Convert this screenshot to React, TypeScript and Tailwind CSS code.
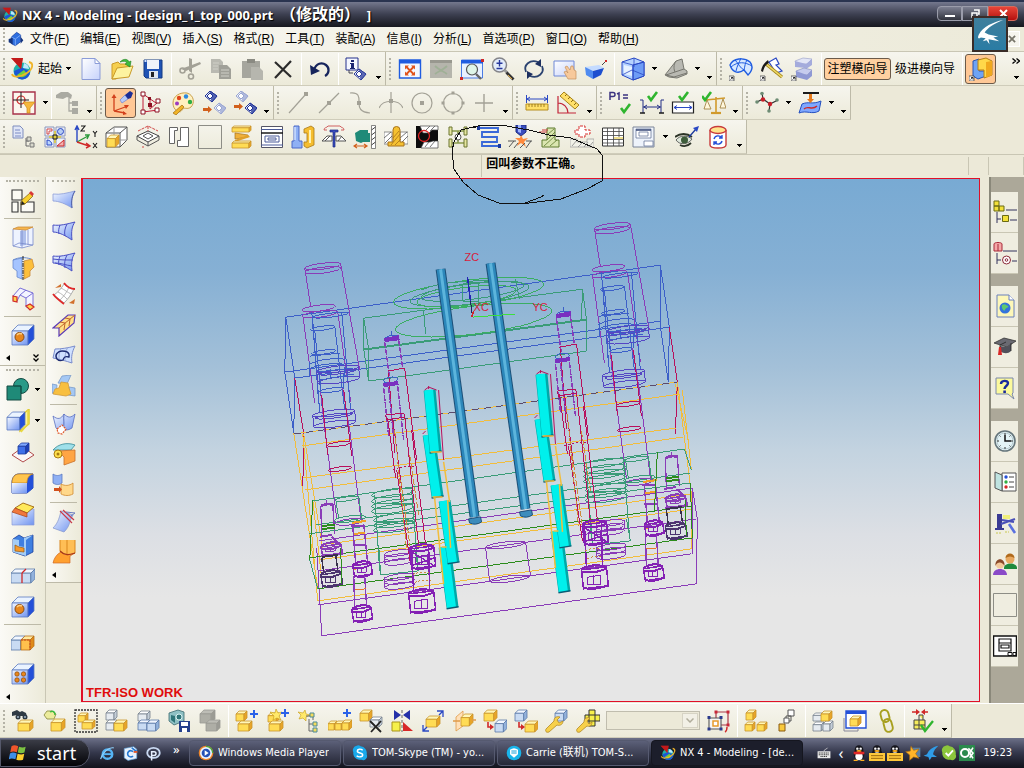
import React from "react";

/* ---------- drawing helpers ---------- */

type PathProps = { d: string; f?: string; s?: string; w?: number; dash?: string };
const P = ({ d, f = "none", s = "none", w = 1, dash }: PathProps) => (
  <path d={d} fill={f} stroke={s} strokeWidth={w} strokeDasharray={dash} />
);

const tones = {
  yellow: ["#fff6b8", "#ffdc55", "#e8a528", "#c9952c"],
  blue: ["#eaf3ff", "url(#faceBlue)", "#2450d8", "#5a78c0"],
  royal: ["#7fa8ff", "#3f6fe8", "#1c3fb8", "#1c3a9c"],
  ghost: ["#ffffff", "#e6ebf0", "#c4ced8", "#76828e"],
  pale: ["#f2f7ff", "#c9dbf3", "#93b2dc", "#5a7aa8"],
  grey: ["#bdbdb6", "#aeaea6", "#9b9b94", "#9b9b94"],
  amber: ["#ffe9a0", "#ffc14d", "#e08a1a", "#b8701a"],
} as const;

type CubeProps = { x: number; y: number; w: number; h?: number; tone?: keyof typeof tones };
const Cube = ({ x, y, w, h = w, tone = "yellow" }: CubeProps) => {
  const [t, f, s, e] = tones[tone];
  const d = Math.min(w, h) * 0.3;
  return (
    <g stroke={e} strokeWidth={0.8} strokeLinejoin="round">
      <path d={`M${x} ${y + d}L${x + d} ${y}H${x + w}L${x + w - d} ${y + d}Z`} fill={t} />
      <path d={`M${x} ${y + d}H${x + w - d}V${y + h}H${x}Z`} fill={f} />
      <path d={`M${x + w - d} ${y + d}L${x + w} ${y}V${y + h - d}L${x + w - d} ${y + h}Z`} fill={s} />
    </g>
  );
};

const Check = ({ x, y }: { x: number; y: number }) => (
  <path d={`M${x} ${y + 4}l3 4l6 -8`} fill="none" stroke="#2fb52f" strokeWidth={2.6} />
);
const Plus = ({ x, y }: { x: number; y: number }) => (
  <path d={`M${x} ${y}v8M${x - 4} ${y + 4}h8`} stroke="#2b62e8" strokeWidth={2} />
);
const Binoculars = ({ x, y, c }: { x: number; y: number; c: string }) => (
  <g fill={c}>
    <path d={`M${x} ${y + 2}l5-2l3 2l2-1l4 2l1 4l-3-1l-4 0l-3-1l-5 1z`} />
    <circle cx={x + 6} cy={y + 7} r={2.5} />
    <circle cx={x + 13} cy={y + 7} r={2.5} />
    <circle cx={x + 6} cy={y + 7} r={1} fill="#9fb4c8" />
    <circle cx={x + 13} cy={y + 7} r={1} fill="#9fb4c8" />
  </g>
);
const Shortcut = () => (
  <g>
    <path d="M0 19h5v5H0z" fill="#fff" stroke="#333" strokeWidth={0.7} />
    <path d="M1.5 22.5L3.8 20.500M2 20.500h2v2" stroke="#111" fill="none" strokeWidth={0.8} />
  </g>
);
const Diamond = ({ x, y, c }: { x: number; y: number; c: string }) => (
  <g stroke={c} strokeWidth={1}>
    <path d={`M${x} ${y + 5}l5-5l7 5l-5 6z`} fill="#eef2fb" />
    <path d={`M${x + 5} ${y}l7 5l-5 6z`} fill={c} opacity={0.75} />
    <path d={`M${x + 2} ${y + 5}l3-3l3 3l-3 3z`} fill="#fff" />
  </g>
);
const Nx = () => (
  <g>
    <circle cx={12} cy={14} r={8.5} fill="#1fb1a8" />
    <path d="M4 14a8.500 8.500 0 0 0 8 8.500c5 0 8-4 8-8l-8-4z" fill="#1d56d6" />
    <path d="M7 18c3 3 8 3 10-1l-3-4z" fill="#6fd23c" />
    <path d="M14 6c3 1 5 3 5 6l-6-1z" fill="#bfe8ff" />
    <path d="M1 1l12 0l-2 11z" fill="#e02424" />
    <path d="M1 1l10 11l2-11z" fill="#a91212" opacity={0.55} />
    <path d="M19 5c5 1 4 7-2 11S3 21 2 17" fill="none" stroke="#f0b429" strokeWidth={1.8} />
  </g>
);
const Windshape = () => (
  <g>
    <path d="M3 4c3-2 5-1 8 0l-1.500 7c-3-1-5-1.500-8 0z" fill="#f0562b" />
    <path d="M12 4.500c3 1 5 1.500 8 0l-1.500 7c-3 1-5 1-8 0z" fill="#7cc242" />
    <path d="M1.200 12.500c3-2 5-1 8 0l-1.500 7c-3-1-5-1.500-8 0z" fill="#3f8fe8" />
    <path d="M10.300 13c3 1 5 1.500 8 0l-1.500 7c-3 1-5 1-8 0z" fill="#ffd02e" />
  </g>
);
const Penguin = () => (
  <g>
    <ellipse cx={12} cy={14} rx={8} ry={9} fill="#15151c" />
    <circle cx={12} cy={7} r={6.500} fill="#15151c" />
    <ellipse cx={12} cy={17} rx={5.500} ry={6} fill="#fff" />
    <circle cx={9.500} cy={5.500} r={1.800} fill="#fff" />
    <circle cx={14.500} cy={5.500} r={1.800} fill="#fff" />
    <ellipse cx={12} cy={9} rx={4} ry={1.600} fill="#ffb01f" />
  </g>
);

/* ---------- icon set (24 x 24) ---------- */

const BL = "#2a48c4";
const K = "#1a1a1a";
const GR = "#a3a196";
const RD = "#d02828";

const icons: Record<string, React.ReactNode> = {
  nx: <Nx />,
  assembly: (
    <g>
      <P d="M5 9l8-7l6 4v10l-8 6l-6-3z" f="#2f6fe0" s="#163b96" />
      <P d="M5 9l6 3l8-6M11 12v10" s="#9cc2ff" />
      <P d="M1 12l6-2v10l-6-3zM19 9l4 5l-4 5z" f="#16357f" />
    </g>
  ),
  newFile: (
    <g>
      <P d="M3 1.500h13l5 5v16H3z" f="url(#paper)" s="#8b9cd8" />
      <P d="M16 1.500v5h5z" f="#fff" s="#8b9cd8" />
    </g>
  ),
  open: (
    <g>
      <P d="M2 7l6-2l2 2h9v5L6 22H2z" f="#f6d050" s="#c99a28" />
      <P d="M2 22l5-11l16-2l-4 11z" f="#fdf3a0" s="#c99a28" />
      <P d="M10 5c4-4 8-3 9 0l2-1l-1 6l-5-3l2-1c-1-2-4-2-7-1z" f="#3dbb3d" s="#1f7d1f" w={0.6} />
    </g>
  ),
  save: (
    <g>
      <P d="M3 3h18v18H5l-2-2z" f="#1f53b4" s="#143a82" />
      <P d="M6 3h12v9H6z" f="#eef3fa" />
      <P d="M8 14h9v7H8z" f="#dfe6ee" />
      <P d="M10 15h3v5h-3z" f="#222" />
      <P d="M3.500 3h2v2h-2z" f="#cfe0ff" />
    </g>
  ),
  cut: (
    <g>
      <P d="M3 12l19-7l1 2l-15 7M11 1l3 1l0 14l-3-2z" f={GR} />
      <circle cx={4.500} cy={13.500} r={2.500} fill="none" stroke={GR} strokeWidth={1.600} />
      <circle cx={13} cy={19.500} r={2.500} fill="none" stroke={GR} strokeWidth={1.600} />
    </g>
  ),
  copy: (
    <g>
      <P d="M2 2h9l3 3v11H2z" f="#b9b9b1" />
      <P d="M10 8h8l4 4v10H10z" f="#a0a098" />
      <P d="M4 6h6M4 9h5M4 12h5M12 13h8M12 16h8M12 19h8" s="#cfcfc7" />
    </g>
  ),
  paste: (
    <g>
      <P d="M2 4h18v17H2z" f="#a6a69e" />
      <P d="M7 2h8v4H7z" f="#8a8a82" />
      <P d="M11 10h8l4 4v9H11z" f="#b6b6ae" />
    </g>
  ),
  del: <P d="M4 5l16 15M20 4L4 21" s="#2b2b2b" w={2.2} />,
  undo: (
    <g>
      <P d="M6 13C8 6 14 5 18 8c4 3 3 9-1 11" s="#16245c" w={2.200} />
      <P d="M2 8l1 10l9-4z" f="#16245c" />
    </g>
  ),
  info: (
    <g>
      <P d="M1 1h12v12H1z" f="#f4f7ff" s="#24308c" />
      <P d="M6 3h3v2H6zM5 6h4v5h1v1H5v-1h1V7H5z" f="#1a2470" />
      <P d="M4 13v3h4" s="#445" />
      <Diamond x={9} y={12} c="#2c3c9c" />
    </g>
  ),
  fit: (
    <g>
      <P d="M1.500 3h21v18h-21z" f="#f3f8ff" s="#1f5ce0" w={1.400} />
      <P d="M1 3h22v3.500H1z" f="#1f5ce0" />
      <P d="M8.500 10l7 7M15.500 10l-7 7" s="#e0541c" w={1.800} />
      <P d="M7 8.500h4l-4 4zM17 8.500h-4l4 4zM7 18.500h4l-4-4zM17 18.500h-4l4-4z" f="#e0541c" />
    </g>
  ),
  fitGrey: (
    <g>
      <P d="M1 3h22v18H1z" f="#b5b5ac" />
      <P d="M1 3h22v3H1z" f="#98988f" />
      <P d="M6 9c4 4 8 5 12 8M18 9c-4 4-8 5-12 8" s="#9fb096" w={1.800} />
    </g>
  ),
  zoomBox: (
    <g>
      <P d="M1.500 3h21v18h-21z" f="#e8f1ff" s="#4a7be4" />
      <P d="M1 3h22v3.500H1z" f="#1f5ce0" />
      <circle cx={12} cy={12.500} r={5.500} fill="#dff5e8" stroke="#555" strokeWidth={1.200} />
      <P d="M16 17l5 5" s="#666" w={2.400} />
      <P d="M21 2h3v3h-3zM0 20h3v3H0z" f={RD} />
    </g>
  ),
  zoomInOut: (
    <g>
      <circle cx={8.500} cy={8} r={7} fill="#e3ecfa" stroke="#85858a" strokeWidth={1.500} />
      <P d="M8.500 3v6.500M5.500 6.250h6M5.500 11.500h6" s="#27379c" w={1.400} />
      <P d="M13.500 13l3 3" s="#999" w={2.600} />
      <P d="M15.500 15.500l7 7" s="#333" w={2.800} />
      <P d="M17 18l4 4" s="#e0a83c" />
    </g>
  ),
  rotate: (
    <g>
      <P d="M4 15C1 8 8 2 16 5M20 9c3 7-4 13-12 10" s="#2b4370" w={1.800} />
      <P d="M19 2v8l-6-3zM5 22v-8l6 3z" f="#1d3060" />
    </g>
  ),
  pan: (
    <g>
      <P d="M1 4h20v15H1z" f="url(#paper)" s="#6f88d6" />
      <P d="M12 10l2-1l3 4l1-4h2l1 4l2 1v8h-8l-4-7l2-1l2 2z" f="#f7c99b" s="#c4905c" w={0.700} />
    </g>
  ),
  perspective: (
    <g>
      <P d="M1 10l14-2l5 3l-12 3z" f="#c4dbff" />
      <P d="M1 10l8 4v8l-7-4z" f="#4f8bf0" />
      <P d="M9 14l11-3l-3 7l-8 4z" f="#1d4fcf" />
      <P d="M18 8l3-3" s={K} w={0.800} />
      <P d="M21 3h2v2h-2z" f={RD} />
    </g>
  ),
  shade: (
    <g>
      <P d="M1 5l12-4l10 4v14l-11 4L1 18z" f="#b5d2ff" s={BL} />
      <P d="M12 8l11-3v14l-11 4z" f="#6e9cf6" s={BL} />
      <P d="M3 8l8 2v9l-8-2z" f="#e6f1ff" />
      <P d="M1 5l11 3l11-3M12 8v15M13 1v9M1 18l10-5l12 5" s={BL} w={0.800} />
    </g>
  ),
  wedge: (
    <g>
      <P d="M1 18l11-14l6-2l2 10l3 2v3l-10 4l-8-1z" f="#b9b9b2" s="#77776f" />
      <P d="M12 4c-3 4-2 9-1 11l9-3M11 15l-9 3l8 2l13-4" s="#77776f" />
    </g>
  ),
  freeform: (
    <g>
      <P d="M1 8C4 1 15 0 21 5c4 5 2 9-2 13l-4-5C8 18 3 14 1 8z" f="#d6e8ff" s="#1f5ce0" w={1.400} />
      <P d="M6 3c4 4 5 8 9 10M2 10c7-6 14-5 21-1M12 1c-2 5-4 8-5 13M18 3c-2 3-2 6-3 10" s="#1f5ce0" />
      <Shortcut />
    </g>
  ),
  sheet: (
    <g>
      <P d="M9 5l7-4l3 6l-3 1l6 6l-6 2z" f="#fff" s={BL} w={1.200} />
      <P d="M6 7l16 13" s="#a88a1c" w={3.200} />
      <P d="M6 7l16 13" s="#f0dc6a" w={1.600} />
      <P d="M1 14C2 9 4 6 8 3l1 3c-4 2-5 5-6 9z" f={K} />
      <Shortcut />
    </g>
  ),
  layers: (
    <g>
      <P d="M4 4l8-3l9 1l-5 5H5z" f="#e2e5f6" s="#a0a6cc" w={0.700} />
      <P d="M4 4v6l11 1V7zM15 7l6-5v6l-6 4z" f="#a4abdc" />
      <P d="M5 14l8-3l8 2l-5 5H6z" f="#c6ccee" s="#8890c4" w={0.700} />
      <P d="M5 14v6l11 3v-5zM16 18l5-5v6l-5 4z" f="#8f99d4" />
      <Shortcut />
    </g>
  ),
  moldWizard: (
    <g>
      <P d="M4 4l6-2v12h7v5l-8 3l-5-3z" f="#6fa3f4" s="#2a55b0" />
      <P d="M9 3l8-2l6 3v14l-8 3v-8h-6z" f="#ffd84a" s="#b57f17" />
      <P d="M17 5l6-1v14l-6 3z" f="#f0a81e" />
      <Shortcut />
    </g>
  ),
  filter: (
    <g>
      <P d="M1 1h22v22H1z" f="#fbf6ee" s="#a8324a" w={1.400} />
      <circle cx={9} cy={9} r={4} fill="none" stroke={RD} strokeWidth={1.200} />
      <P d="M9 1v16M1 9h16" s={K} />
      <P d="M11 11h12l-5 6v5h-3v-5z" f="#f6b73c" s="#c98a1a" w={0.700} />
    </g>
  ),
  treeGrey: (
    <g fill="#aaaaa2">
      <path d="M0 4l5-3h7l4 3l-1 4l-4-2l-4 2l-7-1z" />
      <path d="M16 10h6v5h-6zM16 17h6v6h-6z" />
      <P d="M13 7v13h3M13 12h3" s="#aaaaa2" w={1.300} />
    </g>
  ),
  wcs: (
    <g>
      <P d="M5 20V6M5 20l14-5M5 20l11 2" s="#d2401c" w={1.300} />
      <P d="M5 3l2.500 4h-5zM20 14l-3 4l-2-4zM18 23l-4 1v-4z" f="#d2401c" />
      <P d="M11 9l5-5l3 4l-6 4z" f="#b8ccfa" s="#5a74d0" w={0.600} />
      <P d="M16 4l5-4l3 2l-2 5l-3 1z" f="#1e2f96" />
    </g>
  ),
  points: (
    <g>
      <P d="M3 3v18M3 3l13 9M3 21l15-2M10 9v9l7-6" s="#c01c38" />
      <P d="M1 1h4v4H1zM1 19h4v4H1zM16 8h4v4h-4zM15 17h4v4h-4z" f="#fff" s="#8b1022" />
      <P d="M8 12h4v4H8zM8 6h3v3H8z" f="#8b1022" />
    </g>
  ),
  palette: (
    <g>
      <P d="M2 12C2 5 9 1 16 2c7 2 8 10 4 14c-4 3-6 0-8 2s-2 4-6 2c-3-2-4-5-4-8z" f="#fff0c0" s="#c9a04a" />
      <circle cx={8} cy={7} r={2.200} fill="#e0451c" />
      <circle cx={15} cy={5.500} r={2.200} fill="#2c8ae0" />
      <circle cx={19} cy={11} r={2.200} fill="#2fae43" />
      <circle cx={6} cy={12.500} r={2} fill="#9a3cc0" />
      <P d="M2 22l9-8l2 2L5 24z" f="#f0b429" s="#a06a10" w={0.700} />
    </g>
  ),
  showHide: (
    <g>
      <Diamond x={3} y={0} c="#1f3298" />
      <Diamond x={12} y={12} c="#9aa6d2" />
      <P d="M1 17h5v-2l4 3.500l-4 3.500v-2H1z" f="#d2601c" />
    </g>
  ),
  hideShow: (
    <g>
      <Diamond x={3} y={0} c="#9aa6d2" />
      <Diamond x={12} y={12} c="#1f3298" />
      <P d="M1 14h5v-2l4 3.500l-4 3.500v-2H1z" f="#d2601c" />
    </g>
  ),
  line: (
    <g>
      <P d="M3 22L20 3" s={GR} w={1.200} />
      <P d="M18 1h4v4h-4z" f={GR} />
    </g>
  ),
  lineMid: (
    <g>
      <P d="M2 22L22 2" s={GR} w={1.200} />
      <P d="M10 10h4v4h-4z" f={GR} />
    </g>
  ),
  curve: (
    <g>
      <P d="M2 2c10-1 9 5 9 10s1 9 11 10" s={GR} w={1.200} />
      <P d="M9 10h4v4H9z" f={GR} />
    </g>
  ),
  cross: (
    <g>
      <P d="M12 1v21M0 17C4 8 20 8 24 17" s={GR} w={1.200} />
      <P d="M10 8h4v4h-4z" f={GR} />
    </g>
  ),
  circleDot: (
    <g>
      <circle cx={12} cy={12} r={10} fill="none" stroke={GR} strokeWidth={1.200} />
      <P d="M10 10h4v4h-4z" f={GR} />
    </g>
  ),
  circleQuad: (
    <g>
      <circle cx={12} cy={12} r={9.500} fill="none" stroke={GR} strokeWidth={1.200} />
      <P d="M10.500 0.500h3v3h-3zM10.500 20.500h3v3h-3zM0.500 10.500h3v3h-3zM20.500 10.500h3v3h-3z" f={GR} />
    </g>
  ),
  plusGrey: <P d="M12 3v18M3 12h18" s={GR} w={1.400} />,
  ruler: (
    <g>
      <P d="M2 8h20M1.500 4v8M22.500 4v8M5 6L2 8l3 2M19 6l3 2l-3 2" s={BL} />
      <P d="M1 13h22v6H1z" f="#ffe069" s="#b58d1e" />
      <P d="M4 13v3M7 13v3M10 13v3M13 13v3M16 13v3M19 13v3" s="#8b6a14" w={0.800} />
    </g>
  ),
  angle: (
    <g>
      <P d="M2 5v17h18M2 12a10 10 0 0 1 10 10" s="#c22438" w={1.200} />
      <P d="M8 1l15 13l-4 4L4 5z" f="#ffe069" s="#a8841a" />
      <P d="M9 5l2-2M12 8l2-2M15 11l2-2M18 14l2-2" s="#8b6a14" />
    </g>
  ),
  p1: (
    <g>
      <P d="M1 9V1.500h3a2 2 0 0 1 0 4H1M8 3l2-1v7M14 4h5M14 7h5" s="#3b3380" w={1.500} />
      <Check x={12} y={13} />
    </g>
  ),
  gapCheck: (
    <g>
      <P d="M3 9v13M0 9h3M21 9v13M24 9h-3M3 16h18M7 14l-3 2l3 2M17 14l3 2l-3 2" s="#222e86" />
      <P d="M0 22h5M19 22h5" s={K} w={1.500} />
      <Check x={8} y={1} />
    </g>
  ),
  boxCheck: (
    <g>
      <P d="M1.500 11h21v11h-21z" f="#fff" s="#222" w={1.200} />
      <P d="M3 16.500h18M6 14.500l-3 2l3 2M18 14.500l3 2l-3 2" s={BL} />
      <Check x={8} y={1} />
    </g>
  ),
  balance: (
    <g>
      <P d="M14 6v15M4 9l19-2" s="#d19a2c" w={1.600} />
      <P d="M5 9l-3 9h7zM21 8l-3 9h6z" f="#fff7dc" s="#9a7a36" w={0.800} />
      <P d="M9 22h10" s="#d19a2c" w={2.200} />
      <Check x={0} y={1} />
    </g>
  ),
  spline: (
    <g>
      <P d="M2 11l6-3l7 5l8-4M8 8L7 2M15 13l-1 7" s="#333" w={1.200} />
      <g fill="#c81e28">
        <circle cx={8} cy={8.500} r={2.200} />
        <circle cx={15} cy={13} r={2.200} />
      </g>
      <g fill="#6d8c74">
        <circle cx={2} cy={11} r={1.800} />
        <circle cx={22} cy={9} r={1.800} />
        <circle cx={7} cy={2.500} r={1.800} />
        <circle cx={14} cy={20} r={1.800} />
      </g>
    </g>
  ),
  project: (
    <g>
      <P d="M5 2h16" s={K} w={2} />
      <P d="M4 13c7-3 10 1 19-3l-2 10c-7 4-12-1-20 2z" f="#7fa8ff" s="#2450c0" />
      <P d="M6 18c4-4 8 2 13-3" s={RD} w={1.400} />
      <P d="M11 3h3v5h2l-3.500 4l-3.500-4h2z" f="#e67a1c" />
    </g>
  ),
  projectInit: (
    <g>
      <P d="M1 1h7l3 3v9H1z" f="#dfe5f6" s="#7f8dbd" />
      <P d="M3 5h5M3 8h6M3 11h6" s="#7a8ac4" />
      <P d="M14 13v8h3M14 16h3" s="#666" />
      <P d="M15 12h4v4h-4zM18 18h4v4h-4z" f="#d8d8cc" s="#777" />
    </g>
  ),
  family: (
    <g>
      <P d="M2 2h9v9H2zM13 2h9v9h-9zM2 13h9v9H2zM13 13h9v9h-9z" f="#eef2fa" s="#8a96bc" />
      <P d="M4 4h5v2H6v3H4z" f="#fff" s="#d04848" />
      <circle cx={17.500} cy={6.500} r={3} fill="#b6cdf4" stroke={BL} />
      <P d="M4 20v-5a5 5 0 0 1 5 5z" f="#bcd6ff" s={BL} />
      <P d="M14 21l7-6v6z" f="#f2b0b0" s={RD} />
      <P d="M12 6v12M6 12h12" s="#e0cc30" w={1.500} />
      <P d="M10 10h4v4h-4z" s={K} />
    </g>
  ),
  moldCsys: (
    <g>
      <P d="M3 17V2M1 5l2-4l2 4" s={BL} w={1.400} />
      <P d="M3 17l11-6M11 10l4 0l-2 4" s="#2d9a3c" w={1.400} />
      <P d="M3 17l12 4M12 18l4 3l-4 2" s={RD} w={1.400} />
      <P d="M7 1h4l-4 5h4M19 6l2 2.500l2-2.500M21 8.500V12M19 18l4 5M23 18l-4 5" s={K} w={1.100} />
    </g>
  ),
  workpiece: (
    <g>
      <P d="M1 8l8-6h13v13l-7 7H1zM1 8h14v14M15 8l7-6" f="#fff" s="#555" />
      <P d="M9 2v13h13" s="#999" />
      <Cube x={2} y={10} w={12} />
    </g>
  ),
  cavityLayout: (
    <g>
      <P d="M1 11l11-5l11 5l-11 6z" f="#fff" s="#444" />
      <P d="M1 11v4l11 6l11-6v-4M12 17v4M7 11l5-3l5 3l-5 3z" s="#555" />
      <P d="M2 6l10-5l10 5M12 1v5M7 21v2" s="#d04848" dash="3 1" />
    </g>
  ),
  moldTools: <P d="M2.500 2.500h8v3h-3v13h-5zM21.500 2.500h-8v13h-3v6h11z" f="#fff" s="#666" />,
  blankBox: <P d="M0.500 0.500h23v23h-23z" s="#8d8d86" />,
  parting: (
    <g>
      <Cube x={3} y={1} w={19} h={6} />
      <P d="M6 8l13 2l0 2l-13 2z" f="#f0b03a" s="#a8731a" w={0.700} />
      <P d="M19 10l-13 5l0 2l15-5z" f="#e0a02a" />
      <Cube x={3} y={16} w={19} h={7} />
    </g>
  ),
  moldBase: (
    <g>
      <P d="M1.500 1.500h21v21h-21z" f="#fff" s="#556" />
      <P d="M1 4.500h22M1 20h22M5 11h14v6H5zM8 13h8v2H8z" s="#4a5a98" />
      <P d="M1 8h22" s={K} w={1.500} />
    </g>
  ),
  standardPart: (
    <g>
      <P d="M3 1h5v15h3v7H1v-7h2z" f="#8fb0f4" s="#4a68c8" />
      <P d="M4 2v13" s="#d6e4ff" w={1.400} />
      <P d="M13 4l7-3l3 2v17l-7 3l-3-2v-4h3V8h-3z" f="#f5bd2f" s="#a8781a" w={0.800} />
      <P d="M18 5h2v13h-2z" f="#fff1b0" />
    </g>
  ),
  ejector: (
    <g>
      <P d="M8 5h8v2h-3v15h-2V7H8z" f="#3a4ec0" s="#1a2a80" w={0.700} />
      <P d="M0 16l5-5h5v5zM24 16l-5-5h-5v5z" f="#fff" s="#555" />
      <P d="M3 16l5-5M16 16l4-5" s="#555" />
      <P d="M2 5c0-3 3-2 4-4h12c1 2 4 1 4 4M2 5h3M19 5h3" s="#d06060" />
    </g>
  ),
  slider: (
    <g>
      <P d="M2 8l5-3h8v3h2v9h-7l-2 1l-5-2z" f="#1f8a78" />
      <P d="M18.500 0.500h4v23h-4z" f="#fff" s="#555" w={0.700} />
      <P d="M18.500 5l4-3M18.500 10l4-3M18.500 15l4-3M18.500 20l4-3" s="#444" />
      <P d="M2 21h11M4 19l-3 2l3 2M11 19l3 2l-3 2" s="#d2601c" w={1.200} />
    </g>
  ),
  insert: (
    <g>
      <P d="M0 7h8v12H0zM16 7h8v12h-8z" f="#fff" s="#666" w={0.700} />
      <P d="M0 13l7-6M1 18l7-7M16 13l7-6M17 18l7-7" s="#555" w={0.800} />
      <P d="M9 5a3 3 0 0 1 7 0v12h4v4H4v-4h5z" f="#f5c132" s="#a8731a" />
      <P d="M7 20l9-11M11 20l6-6M9 13l6-7" s="#a8731a" w={0.800} />
    </g>
  ),
  gate: (
    <g>
      <P d="M1 1h22v22H1z" f="#0c0c0c" />
      <P d="M5 1h18v4h-6l-3 3H8zM6 23l3-6h6l3-1h5v7z" f="#fff" s="#444" w={0.700} />
      <P d="M10 6l5-5M15 6l5-5M10 22l4-5M15 22l5-6" s="#555" w={0.800} />
      <circle cx={9} cy={11} r={5.500} fill="none" stroke="#e02424" strokeWidth={1.300} />
    </g>
  ),
  runner: (
    <g>
      <P d="M5 6h14M5 18h14M12 6v12" s="#8a9a4c" w={1.600} />
      <P d="M3 2h3v8H3zM18 2h3v8h-3zM3 14h3v8H3zM18 14h3v8h-3z" f="#e6e6a0" s="#6a7430" />
      <circle cx={12} cy={12} r={3} fill="#fff" stroke="#555" />
    </g>
  ),
  cooling: (
    <g>
      <P d="M2 3h19v4H5v5h15v5H5v4h17" s="#3a68d8" w={1.900} />
      <P d="M0 1h3v4H0zM21 19h3v4h-3z" f="#1c3a9c" />
    </g>
  ),
  electrode: (
    <g>
      <P d="M8 0h10v7l-5 4l-5-4z" f="#3a4ec0" s="#1a2a80" />
      <P d="M10 0h3v8l-3-1z" f="#9fb4ff" />
      <P d="M13 10l2 4l5-1l-4 4l2 5l-5-4l-4 3l2-5l-4-3h5z" f="#ff8a3c" />
      <P d="M0 16h8M1 22l5-6M6 23l4-5M12 23l5-5M18 23l5-7M18 16h6" s="#555" />
    </g>
  ),
  trim: (
    <g>
      <P d="M8 3h8v12h4v7H3v-7h5z" f="#dbe6b0" s="#5f7a2e" />
      <P d="M8 10l7-6M8 15l8-8M5 21l11-10M11 21l7-6" s="#5f7a2e" w={0.800} />
      <P d="M0 7h8M3 5h6" s="#c83a3a" />
    </g>
  ),
  subtract: (
    <g>
      <P d="M9 12V9H5V5h4V1h6v4h5v4h-5v3z" f="#fff" s="#d83030" dash="3 1" />
      <P d="M0 14h7v3h10v-3h7v8H0z" f="#f1f1e8" s="#999" w={0.700} />
      <P d="M2 21l5-6M8 22l4-4M14 22l4-5M19 22l4-5" s="#888" w={0.800} />
    </g>
  ),
  bom: (
    <g>
      <P d="M1.500 3h21v18h-21z" f="#fff" s="#333" />
      <P d="M1 6.500h22M1 10.500h22M1 14.500h22M1 18h22M6.500 3v18M12.500 3v18M18 3v18" s="#444" w={0.800} />
      <P d="M13 12h9v2h-9z" f="#f0e090" />
    </g>
  ),
  drawing: (
    <g>
      <P d="M1 2h21v20H1z" f="#eef3fb" s="#7a8498" />
      <P d="M4 4h15v9H4zM7 7h9v4H7zM12 16h9v5h-9z" f="#fff" s="#6a789c" w={0.800} />
      <P d="M4 5h15" s="#3a4a78" w={1.500} />
    </g>
  ),
  eye: (
    <g>
      <P d="M1 15c4-5 11-5 16-1c-3 5-12 7-16 1z" f="#dfe8dc" s="#444" w={0.800} />
      <circle cx={9.500} cy={15} r={3.500} fill="#3d5c3a" />
      <P d="M0 12c5-4 12-4 17 0M5 20c4 2 8 1 11-2" s="#2c3428" w={1.800} />
      <P d="M14 12l7-8" s="#1c3a9c" w={1.400} />
      <P d="M18 3l6-2l-2 6z" f="#2a48c4" />
    </g>
  ),
  refreshDb: (
    <g>
      <P d="M4 5v15c0 4 16 4 16 0V5" f="#fff" s="#c83a3a" w={1.400} />
      <ellipse cx={12} cy={5} rx={8} ry={3.500} fill="#ffe48c" stroke="#c83a3a" strokeWidth={1.400} />
      <P d="M8 14c1-4 6-4 8-1M16 16c-1 4-6 4-8 1M16 10v3h-3M8 20v-3h3" s="#2450d8" w={1.400} />
    </g>
  ),
  sketch: (
    <g>
      <P d="M1 1h10v10H1zM1 13h6v10H1zM10 13h13v10H10z" f="#fbfaf4" s="#333" w={1.100} />
      <P d="M10 16l1-5l8-7l3 3l-8 8z" f="#f7cf2e" s="#8b6a14" w={0.800} />
      <P d="M18 4l2-2l3 3l-2 2z" f="#d83838" />
      <P d="M10 16l1-4l3 3z" f="#222" />
    </g>
  ),
  extrude: (
    <g>
      <P d="M2 4v17l9 2l11-3V3" f="#eef3ff" s="#7a8ccc" w={0.800} />
      <P d="M9 6v15l6-1V5z" f="#aebfec" />
      <P d="M2 4l5-2h15l-7 3z" f="#f9b64a" s="#c98a3a" w={0.800} />
      <P d="M2 21l6-3l14 2M11 5v18M17 5v15" s="#7a8ccc" w={0.800} />
    </g>
  ),
  revolve: (
    <g>
      <P d="M11 2L2 4v8l4 3v6l5 2z" f="#a5c4ff" s="#6a8cd0" w={0.800} />
      <P d="M13 5l8-2l2 8l-4 4v5l-6 3z" f="#fcbf3c" s="#c98a3a" w={0.800} />
      <P d="M2 4c6-3 12-3 18-1" s="#6a8cd0" />
      <P d="M12 0v24" s="#222" dash="4 1 1 1" />
    </g>
  ),
  sweep: (
    <g>
      <P d="M2 9l7-8l13 5v14h-7v-9l-6-3l-3 6z" f="#f4f4ff" s="#7a70d8" />
      <P d="M2 9l4 1v5l-4-1zM15 19l4-2l4 3l-4 3z" f="#ffd34d" s="#d02828" w={1.200} />
      <P d="M9 8l6-5M15 11l7-5" s="#7a70d8" />
    </g>
  ),
  hole: (
    <g>
      <Cube x={1} y={2} w={22} h={20} tone="blue" />
      <circle cx={8.500} cy={14} r={4.500} fill="#e8861c" stroke="#8a4a10" />
      <P d="M6 12a4 4 0 0 1 5-1" s="#ffd080" w={1.500} />
    </g>
  ),
  unite: (
    <g>
      <circle cx={15} cy={8} r={7.500} fill="#2a9a88" stroke="#144a42" />
      <P d="M1 8h14v14H1z" f="#1f8a78" s="#144a42" />
      <P d="M8 8h7v7" s="#0f5048" />
    </g>
  ),
  trimBody: (
    <g>
      <P d="M14 22V8l9-8v15z" f="#fdf39a" s="#e0cc30" w={1.500} />
      <Cube x={1} y={3} w={18} h={18} tone="blue" />
      <P d="M15 23l7-8V1" s="#e8d840" w={1.500} />
    </g>
  ),
  offsetCube: (
    <g>
      <P d="M12 7L1 15l11 7l11-7z" f="#fbf6f6" s="#b04a4a" />
      <Cube x={7} y={3} w={11} tone="royal" />
    </g>
  ),
  blend: (
    <g>
      <P d="M1 12c0-6 3-9 7-9h14v14l-6 5H1z" f="#7fa8ff" s="#2a4ab0" />
      <P d="M16 12c0-5 2-8 6-9v14l-6 5z" f="#2450d8" />
      <P d="M1 12c0-6 3-9 7-9h14c-4 1-6 4-6 9z" f="#ffc54d" s="#b87a20" w={0.700} />
      <P d="M1 12h15v10H1z" f="url(#faceBlue)" />
    </g>
  ),
  chamfer: (
    <g>
      <P d="M1 10v13h22V7z" f="url(#faceBlue)" s="#8a9cd8" w={0.700} />
      <P d="M4 6l8-5l11 4l-7 6z" f="#ffe95a" s="#a8731a" />
      <P d="M4 6l12 5l0 4L1 10z" f="#f0783c" s="#a8431a" w={0.700} />
    </g>
  ),
  shell: (
    <g>
      <P d="M2 6l6-4l5 3l9-3v17l-8 4l-12-4z" f="#3f7fe0" s="#1c3f9a" w={0.800} />
      <P d="M2 6l6 1v6l5 1V5l9-3l-7 5v16L2 19z" f="#a4cdf6" />
      <P d="M4 12l4 2l5 1v4L4 18z" f="#f59a2a" s="#9a5a10" w={0.700} />
    </g>
  ),
  bodies: (
    <g>
      <Cube x={0} y={5} w={24} h={14} tone="pale" />
      <P d="M11 9v10M11 9l4-4" s={RD} w={1.300} />
    </g>
  ),
  booleanBox: (
    <g>
      <Cube x={0} y={5} w={14} h={14} tone="pale" />
      <Cube x={10} y={5} w={13} h={14} tone="amber" />
      <P d="M10 9h9v10" s="#d04818" dash="2 1" />
    </g>
  ),
  pattern: (
    <g>
      <Cube x={1} y={2} w={22} h={20} tone="blue" />
      <g fill="#e8861c" stroke="#8a4a10" strokeWidth={0.700}>
        <circle cx={6} cy={12} r={2.200} />
        <circle cx={12.500} cy={12} r={2.200} />
        <circle cx={6} cy={18} r={2.200} />
        <circle cx={12.500} cy={18} r={2.200} />
      </g>
    </g>
  ),
  surf1: (
    <g>
      <P d="M1 5c7 1 14-1 22-3c-3 4-4 9-3 17C14 15 7 12 1 12z" f="url(#faceBlue)" s="#8a9cd8" w={0.800} />
      <P d="M20 19c-1-7 0-12 3-17" s="#4a5ca8" />
    </g>
  ),
  surf2: (
    <g>
      <P d="M1 5c7 1 14-1 22-3c-3 4-4 9-3 18C14 16 7 12 1 12z" f="url(#faceBlue)" s="#4a50c4" />
      <P d="M8 5c-1 3-2 6-1 9M15 4c-2 4-3 8-2 12" s="#4a50c4" />
    </g>
  ),
  surf3: (
    <g>
      <P d="M1 5c7 1 14-1 22-3c-3 4-4 9-3 18C14 16 7 12 1 12z" f="url(#faceBlue)" s="#4a50c4" />
      <P d="M8 5c-1 3-2 6-1 9M15 4c-2 4-3 8-2 13M1 8c7 1 13 1 20 1M3 12c6 0 10 2 17 3" s="#4a50c4" />
    </g>
  ),
  sweptSurf: (
    <g>
      <P d="M2 13c4-3 7-6 10-11c3 3 6 4 10 5c-3 6-6 10-10 14C9 18 5 16 2 13z" f="#fff" s="#999" w={0.800} />
      <P d="M6 10c4 2 6 4 9 7M9 6c4 2 6 4 10 6M17 5c-2 5-5 9-9 13" s="#aaa" w={0.800} />
      <P d="M12 1c3 4 7 6 11 6M1 12c3 4 7 7 11 10" s="#e02828" w={1.800} />
      <P d="M3 6l6-4l0 3zM17 21l6-4l-1 5z" f="#d2702c" />
    </g>
  ),
  section: (
    <g>
      <P d="M1 15L16 2l7 0l-1 8L7 23l0-8z" f="#ffe089" s="#5a3ab8" w={1.200} />
      <P d="M7 15L23 2M8 9l5 1l-1 7M13 5l5 1l-1 7" s="#c0622a" />
    </g>
  ),
  boundedPlane: (
    <g>
      <P d="M3 5c6 0 13-1 20-3c-3 6-4 11-3 17c-6-2-13-4-19-5z" f="#cfe0ff" s="#7a8ccc" />
      <P d="M9 4c-2 5-2 8-2 12M16 3c-3 5-3 10-3 14" s="#9aaad8" />
      <P d="M5 15c-3-4 1-8 5-8s8 1 7 6c-4-1-5 0-6 3c-2 1-4 1-6-1z" s="#1c2a70" w={1.300} />
    </g>
  ),
  tjoint: (
    <g>
      <P d="M10 1l9-1l-4 9l-9-1zM0 9l5 1l-1 9l-4-1zM17 12l6 1v8l-7-1z" f="#a5c8f4" s="#7a9ac8" w={0.800} />
      <P d="M9 7l7 1l1 5l2 6l-5 2l-13-2l2-5l4-1z" f="#f8bf3f" s="#d09a3a" w={0.800} />
    </g>
  ),
  nsided: (
    <g>
      <P d="M1 5c5 4 8 3 11-2c4 4 7 4 11 0l-3 14c-4 3-7 1-12 4L4 17z" f="url(#faceBlue)" s="#5a70c0" w={0.800} />
      <P d="M12 3c-1 6 1 10-1 15" s="#5a70c0" />
      <P d="M5 18l5-4l4 4l-4 5l-4-1z" f="#fff" s="#e0582a" w={1.200} dash="2 1" />
    </g>
  ),
  rollSurf: (
    <g>
      <P d="M1 8C6 2 15 0 23 3l-4 5z" f="#9fe0ea" s="#3a8c98" w={0.800} />
      <P d="M6 9l17-1v11l-11 4v-8z" f="#ffa544" s="#c8702a" w={0.800} />
      <circle cx={6} cy={12} r={4} fill="#ffe14d" stroke="#a87a14" />
      <circle cx={6} cy={12} r={1.500} fill="#a87a14" />
    </g>
  ),
  offsetSurf: (
    <g>
      <P d="M1 1c3 2 6 2 9 0v9c-3 2-6 2-9 0z" f="#8fb0f4" s="#5a78c0" w={0.800} />
      <P d="M9 11c4 2 8 2 12-1v11c-4 2-8 2-12 0z" f="#ffd88a" s="#d08a30" w={0.800} />
      <P d="M2 15h5v-2l3 3.500l-3 3.500v-2H2z" f="#d2501c" />
    </g>
  ),
  trimSheet: (
    <g>
      <P d="M9 2l12 4l-3 6c-1 5-3 8-6 11L1 19c4-4 6-8 8-17z" f="url(#faceBlue)" s="#8a9cd0" w={0.800} />
      <P d="M8 2l12 12M11 1l11 10" s="#c83a4a" w={1.200} />
      <P d="M14 3l9 1l-4 3" s="#6a7cc0" />
    </g>
  ),
  bridge: (
    <g>
      <P d="M8 0h15v14H8z" f="#ffbe55" />
      <P d="M8 0v11M15 0v14M23 0v13" s="#d9871f" />
      <P d="M1 23c1-5 4-9 8-11c4 4 9 3 14 1l-5 3v7z" f="#ffa02f" s="#d06a2a" w={0.700} />
      <P d="M8 11c5 5 9 4 15 2" s="#a83a1a" w={1.300} />
    </g>
  ),
  findComp: (
    <g>
      <Binoculars x={0} y={1} c="#2f3a44" />
      <Cube x={6} y={11} w={15} h={11} />
    </g>
  ),
  openComp: (
    <g>
      <P d="M1 6l3-4h5l4 3l-2 5H4z" f="#ecec9c" s="#9a9a54" />
      <P d="M7 3c3-2 5 0 5 3" s="#3dbb3d" w={1.500} />
      <Cube x={8} y={10} w={14} h={12} />
    </g>
  ),
  selectComp: (
    <g>
      <P d="M1 1h22v22H1z" s="#333" w={1.300} dash="2 1" />
      <Cube x={4} y={4} w={10} h={9} />
      <Cube x={8} y={11} w={13} h={9} />
    </g>
  ),
  context: (
    <g>
      <Cube x={1} y={1} w={11} h={10} tone="ghost" />
      <Cube x={1} y={11} w={11} h={10} tone="ghost" />
      <Cube x={9} y={11} w={13} h={11} />
    </g>
  ),
  wireComp: (
    <g>
      <Cube x={2} y={2} w={12} h={10} tone="ghost" />
      <Cube x={2} y={11} w={12} h={10} tone="pale" />
      <Cube x={11} y={11} w={12} h={11} tone="pale" />
    </g>
  ),
  saveComp: (
    <g>
      <P d="M2 4l9-3l6 2v9l-10 4l-5-4z" f="#8fc0c4" s="#3a6a70" w={0.800} />
      <P d="M4 6l4 1v7l-4-3z" f="#2f7478" />
      <circle cx={12} cy={8} r={3} fill="#2f7478" stroke="#d8f0f0" />
      <P d="M12 12h11v11H12z" f="#24408c" />
      <P d="M14 13h7v4h-7zM15 19h5v4h-5z" f="#fff" />
    </g>
  ),
  greyComp: (
    <g>
      <Cube x={2} y={1} w={15} h={13} tone="grey" />
      <Cube x={8} y={11} w={14} h={11} tone="grey" />
    </g>
  ),
  addComp: (
    <g>
      <Cube x={1} y={2} w={11} h={10} />
      <Cube x={3} y={12} w={14} h={10} />
      <Plus x={19} y={1} />
    </g>
  ),
  newComp: (
    <g>
      <Cube x={2} y={4} w={11} h={9} />
      <Cube x={3} y={12} w={14} h={10} />
      <P d="M10 0l2 4l4-1l-3 4l2 4l-4-2l-4 2l1-4l-4-4l5 1z" f="#ffe96a" s="#c49a14" w={0.600} />
      <Plus x={19} y={0} />
    </g>
  ),
  newParent: (
    <g>
      <P d="M8 1l1 4l4 1l-4 2v4l-3-3l-4 1l2-4l-3-3l5 1z" f="#ffe96a" s="#c49a14" w={0.600} />
      <P d="M12 10v12h4M12 15h4M9 7h7v4" s="#666" />
      <P d="M13 4h4v4h-4zM16 13h4v4h-4zM16 19h4v4h-4z" f="#f6dc5a" s="#4a8a9a" />
    </g>
  ),
  array: (
    <g>
      <Cube x={0} y={12} w={9} h={9} />
      <Cube x={7} y={12} w={9} h={9} />
      <Cube x={14} y={11} w={10} h={10} />
      <Plus x={19} y={0} />
    </g>
  ),
  removeComp: (
    <g>
      <Cube x={1} y={1} w={12} h={11} />
      <Cube x={11} y={8} w={12} h={10} tone="ghost" />
      <P d="M11 12l11 11M22 12L12 23" s="#222" w={1.800} />
    </g>
  ),
  mirror: (
    <g>
      <P d="M4 1l7 5l-7 5zM20 1l-7 5l7 5z" f="#2430a8" />
      <P d="M2 13h8v9H2z" f="#f6f04a" s="#a8931a" />
      <P d="M13 13l10 9H13z" f="#d82828" />
      <P d="M12 1v22" s="#666" dash="3 2" />
    </g>
  ),
  moveComp: (
    <g>
      <Cube x={5} y={7} w={14} h={11} />
      <P d="M16 2h6v6M2 16v6h6M22 2l-4 4M2 22l4-4" s={BL} w={1.300} />
    </g>
  ),
  mate: (
    <g>
      <P d="M4 8l7-6v15l-7 5z" f="#ffe0b8" s="#e09a4a" w={0.800} />
      <Cube x={9} y={5} w={12} h={12} />
      <P d="M1 12h7M20 11h4" s="#e09a4a" w={1.300} />
    </g>
  ),
  replace: (
    <g>
      <Cube x={1} y={1} w={13} h={11} />
      <Cube x={12} y={11} w={12} h={12} tone="pale" />
      <P d="M5 13v5h3" s="#d02828" w={1.600} />
      <P d="M7 15l4 3l-4 3z" f="#d02828" />
    </g>
  ),
  replaceTo: (
    <g>
      <Cube x={1} y={1} w={12} h={11} tone="pale" />
      <Cube x={11} y={12} w={13} h={11} />
      <P d="M5 13v5h3" s="#d02828" w={1.600} />
      <P d="M7 15l4 3l-4 3z" f="#d02828" />
    </g>
  ),
  wrench: (
    <g>
      <Cube x={10} y={1} w={12} h={11} tone="pale" />
      <P d="M1 20l8-8c0-4 3-5 6-4l-3 3l2 3l4-2c0 4-4 5-6 4l-8 7c-3 1-4-1-3-3z" f="#f7d04a" s="#b38a26" w={0.800} />
    </g>
  ),
  wrenchCross: (
    <g>
      <P d="M13 1h6v5h5v6h-5v5h-6v-5H9V6h4zM13 6h6v6h-6z" f="#f6f04a" s="#333" />
      <P d="M1 20l7-7c0-4 3-5 6-4l-3 3l2 3l3-2c0 4-3 5-5 4l-7 6c-3 1-4-1-3-3z" f="#f7d04a" s="#b38a26" w={0.800} />
    </g>
  ),
  nodeBox: (
    <g>
      <P d="M9 3h12v13H9z" s="#a83a4a" w={1.200} />
      <P d="M2 9h12v11H2z" f="#f5f5f5" s="#555" w={1.100} />
      <P d="M6 12h5v5H6z" f="#fff" s="#e89a2a" w={1.500} />
      <P d="M0.500 7h3v3h-3zM12.500 7h3v3h-3zM0.500 18.500h3v3h-3zM12.500 18.500h3v3h-3z" f="#2a3a8c" />
      <P d="M7.500 1.500h3v3h-3zM19.500 1.500h3v3h-3zM19.500 14.500h3v3h-3z" f="#c82838" />
      <P d="M18 23c2-1 2-3 2-5" s={RD} w={1.400} />
    </g>
  ),
  explode: (
    <g>
      <Cube x={2} y={1} w={10} h={10} />
      <Cube x={1} y={13} w={10} h={9} />
      <Cube x={13} y={13} w={10} h={9} />
    </g>
  ),
  sequence: (
    <g>
      <P d="M13 1h6v6h-6zM9 9h5v5H9z" f="#fff" s="#555" />
      <P d="M11 9V7h5v5h-2" s="#555" />
      <P d="M4 15h6v7H4z" f="#f8c93c" s="#8a5a10" />
    </g>
  ),
  wave: (
    <g>
      <Cube x={1} y={4} w={11} h={8} tone="ghost" />
      <Cube x={1} y={13} w={11} h={9} tone="ghost" />
      <Cube x={11} y={12} w={10} h={10} tone="ghost" />
      <Cube x={9} y={2} w={11} h={10} />
    </g>
  ),
  windowComp: (
    <g>
      <P d="M3 2h20v17H3z" f="#fff" s="#2450d8" w={1.400} />
      <P d="M3 2h20v3H3z" f="#2450d8" />
      <Cube x={7} y={7} w={11} h={10} />
      <P d="M1 9v13h14v-3" s="#889" />
    </g>
  ),
  chain: (
    <g fill="none" stroke="#a8a020" strokeWidth={1.900}>
      <rect x={7} y={1} width={8} height={12} rx={4} transform="rotate(-15 11 7)" />
      <rect x={10} y={10} width={8} height={13} rx={4} transform="rotate(-15 14 16)" />
    </g>
  ),
  checkComp: (
    <g>
      <P d="M8 6v5h6v9H3v-9h5M3 16h11M8 11v9M8 6h4v5" f="#f6ec5a" s="#444" />
      <P d="M1 3h5M12 3h5" s={RD} w={1.300} />
      <P d="M5 0l4 3l-4 3zM14 0l-4 3l4 3z" f={RD} />
      <P d="M10 16l4 6l8-10" s="#2fb52f" w={2.300} />
    </g>
  ),
  asmNav: (
    <g>
      <P d="M1 6h5v5H1zM6 6h5v5H6zM1 1h5v5H1z" f="#f2e03a" s="#6a6a14" />
      <P d="M13 10h11M4 12v11M4 19h4M17 20h7" s="#33335c" />
      <P d="M9.500 15.500h6v6h-6z" f="#f2e03a" s="#6a6a14" />
    </g>
  ),
  partNav: (
    <g>
      <P d="M1 3c0-2 8-2 8 0v7H1z" f="#f4a8a8" s="#a82838" />
      <P d="M5 3v7" s="#a82838" />
      <P d="M10 10h14M4 12v11M4 19h4M19 20h5" s="#33335c" />
      <circle cx={13.500} cy={19} r={4} fill="#fff" stroke="#8b2838" />
      <circle cx={13.500} cy={19} r={1.300} fill="none" stroke="#8b2838" />
    </g>
  ),
  web: (
    <g>
      <P d="M4 1h12l5 5v17H4z" f="#fdf7b8" s="#6a80bc" />
      <P d="M16 1v5h5" f="#fff" s="#6a80bc" />
      <circle cx={12} cy={14} r={5.500} fill="#3474dc" />
      <P d="M9 11c3-2 4 0 6 1s-3 2-3 4s-4-1-3-5z" f="#5fcb6f" />
    </g>
  ),
  training: (
    <g>
      <P d="M1 8l10-5l12 3l-9 6z" f="#6a6a72" s="#333" w={0.800} />
      <P d="M7 11v5c4 3 8 3 11 0V9l-4 3z" f="#50505a" />
      <P d="M13 7l-6 3v5M18 8v8" s="#222" w={0.800} />
      <P d="M6 12h2l1 8H5z" f="#d82828" />
    </g>
  ),
  help: (
    <g>
      <P d="M3 2h17v15l-1 1l2 5l-6-5H3z" f="#fbf99c" s="#7a88ac" />
      <P d="M8 8c0-4 7-4 7-1c0 3-3.500 3-3.500 6" s="#1a2a9c" w={2.400} />
      <P d="M10.300 14.500h2.600v2.600h-2.600z" f="#1a2a9c" />
    </g>
  ),
  history: (
    <g>
      <circle cx={12} cy={12} r={10} fill="#e3f3f6" stroke="#66767c" strokeWidth={1.600} />
      <circle cx={12} cy={12} r={8} fill="none" stroke="#b8ccd2" />
      <P d="M12 4v2M12 18v2M4 12h2M18 12h2M6.500 6.500l1 1M17.500 6.500l-1 1M6.500 17.500l1-1M17.500 17.500l-1-1" s="#333" />
      <P d="M12 6v6h6" s="#111" w={1.500} />
    </g>
  ),
  paletteTab: (
    <g>
      <P d="M9 3h14v18H9z" f="#fff" s="#555" />
      <P d="M2 2l7 3v16l-7-3z" f="#bfe3e0" s="#555" />
      <P d="M16 7h5M16 12h5M16 17h5" s="#444" />
      <circle cx={13} cy={7} r={1.700} fill="#2450d8" />
      <circle cx={13} cy={12} r={1.700} fill="#2fae43" />
      <circle cx={13} cy={17} r={1.700} fill="#d82828" />
    </g>
  ),
  wizardTab: (
    <g>
      <P d="M4 3h5v14H4zM2 17h9v2H2z" f="#3a3a94" />
      <P d="M10 4h7v4h-7z" f="#f0ee7a" />
      <P d="M8 13l14-5M9 9l12 2" s="#4a50b8" w={2.200} />
      <P d="M16 13l6 9" s="#5a70e0" w={2.600} />
      <P d="M3 22h6M12 21h4" s="#c9c850" dash="2 1" />
    </g>
  ),
  people: (
    <g>
      <P d="M11 16c0-6 13-6 13 0v1H11z" f="#1f8a3c" />
      <circle cx={17} cy={7} r={4.500} fill="#e8a860" />
      <P d="M12.500 6c0-6 9-6 9 0c-3-2-6-2-9 0z" f="#b06a1c" />
      <P d="M0 23c0-8 14-8 14 0z" f="#8a4ac8" />
      <circle cx={7} cy={12.500} r={4} fill="#f4c89a" />
      <P d="M2.500 14c-1-9 10-9 9 0c-2-4-7-5-9 0z" f="#8a4a2a" />
    </g>
  ),
  roles: (
    <g>
      <P d="M0.500 2h23v20h-23z" f="#fff" s="#111" w={1.500} />
      <P d="M6 5h12v12H6zM6 9h12M8 11h8v3H8z" s="#111" w={1.200} />
      <P d="M15 18.500h4v3h-4zM20 18.500h3v3h-3z" s="#111" />
    </g>
  ),
  ie: (
    <g>
      <circle cx={12} cy={13} r={7.500} fill="none" stroke="#55b4f4" strokeWidth={4} />
      <P d="M6 13h13" s="#55b4f4" w={3} />
      <P d="M1 21C3 12 14 1 22 3" s="#8fd0fa" w={1.800} />
    </g>
  ),
  outlook: (
    <g>
      <P d="M2 4l15-3l5 4v15l-14 3l-6-4z" f="#e8f2fc" s="#5aa0dc" />
      <P d="M16 9a5 5 0 1 0 0 7M14 3l8 6" s="#2478d0" w={2.600} />
      <P d="M17 8h6v3h-6z" f="#e0582a" />
    </g>
  ),
  qqLight: (
    <g>
      <ellipse cx={12} cy={11} rx={10} ry={8} fill="none" stroke="#c8d8f0" strokeWidth={3} />
      <P d="M9 23V9h4c4 0 4 6 0 6h-3" s="#e8f0ff" w={2.400} />
    </g>
  ),
  wmp: (
    <g>
      <circle cx={12} cy={12} r={11} fill="#f0862a" />
      <P d="M12 1a11 11 0 0 1 11 11H12z" f="#4aa83c" />
      <circle cx={12} cy={12} r={9} fill="#eaf2ff" />
      <circle cx={12} cy={12} r={6.500} fill="#2450b8" />
      <P d="M10 8l6 4l-6 4z" f="#fff" />
    </g>
  ),
  skype: (
    <g>
      <P d="M7 1a6 6 0 0 1 6 1a10 10 0 0 1 9 12a6 6 0 0 1-8 8A10 10 0 0 1 2 11a7 7 0 0 1 5-10z" f="#19a9ea" />
      <P d="M16 8c-3-3-8-2-8 1c0 4 8 2 8 6c0 3-6 4-9 1" s="#fff" w={2.200} />
    </g>
  ),
  chat: (
    <g>
      <circle cx={12} cy={12} r={11} fill="#19b4ea" />
      <P d="M6 7c4-3 8-3 12 0v7l-6 5l-6-5z" f="#fff" />
      <P d="M8 9h8M8 12h8" s="#19a0d8" w={1.500} />
    </g>
  ),
  keyboard: (
    <g>
      <P d="M1 9h22v12H1z" f="#e8e8e8" />
      <P d="M3 12h18M3 15h18M6 18h12" s="#222" dash="2 1" w={1.500} />
      <P d="M12 9c0-4 4-2 6-6" s="#ddd" w={1.300} />
    </g>
  ),
  penguinRed: (
    <g>
      <Penguin />
      <P d="M4 10h16v4H4z" f="#e02828" />
      <P d="M4 22h6v2H4zM14 22h6v2h-6z" f="#ffb01f" />
    </g>
  ),
  penguinNote: (
    <g>
      <Penguin />
      <P d="M0 12h24v12H0z" f="#ffc83a" />
      <P d="M3 16h18M3 20h18" s="#9a6a10" w={1.500} />
    </g>
  ),
  star: (
    <g>
      <P d="M8 4h15v14H8z" f="#5a80a4" />
      <P d="M9 2l4 6l8-2l-5 7l5 7l-8-2l-6 5v-8l-6-5l7-1z" f="#ffb428" s="#a86a10" />
    </g>
  ),
  bird: <P d="M23 1C14 3 8 8 6 14l-5 2l7 2l2 5l3-5h8l-6-4c1-6 4-9 8-13z" f="#2f9ce8" />,
  skypeOk: (
    <g>
      <P d="M7 1a6 6 0 0 1 6 1a10 10 0 0 1 9 12a6 6 0 0 1-8 8A10 10 0 0 1 2 11a7 7 0 0 1 5-10z" f="#8cc63c" />
      <P d="M7 12l4 4l7-8" s="#fff" w={2.800} />
    </g>
  ),
  nv: (
    <g>
      <P d="M0 0h24v24H0z" f="#2a8a4c" />
      <circle cx={9} cy={12} r={6} fill="none" stroke="#fff" strokeWidth={3} />
      <P d="M14 5l7 7l-5 7M21 4l-5 8l5 8" s="#fff" w={2.400} />
    </g>
  ),
  flag: <Windshape />,
};

/* ---------- toolbar building blocks ---------- */

const Icon = ({ name, className = "size-6" }: { name: string; className?: string }) => (
  <svg viewBox="0 0 24 24" className={`${className} shrink-0`} aria-hidden="true">
    {icons[name]}
  </svg>
);

const Caret = () => (
  <svg viewBox="0 0 5 3" className="h-[3px] w-[5px]" shapeRendering="crispEdges" aria-hidden="true">
    <path d="M0 0h5L2.500 3z" fill="#000" />
  </svg>
);

const Grip = ({ vertical = false }: { vertical?: boolean }) =>
  vertical ? (
    <div className="flex h-2 shrink-0 items-center justify-center px-1.5">
      <div className="flex-1 border-t-2 border-dotted border-[#b4b2a6]" />
    </div>
  ) : (
    <div className="flex w-2 shrink-0 items-center justify-center">
      <div className="h-[22px] border-l-2 border-dotted border-[#b4b2a6]" />
    </div>
  );

const Tool = ({ name, active = false }: { name: string; active?: boolean }) => (
  <button
    type="button"
    aria-label={name}
    className={
      active
        ? "flex h-[30px] w-[31px] shrink-0 items-center justify-center rounded-[3px] border border-[#6b5a4a] bg-[#ffc896]"
        : "flex h-[30px] w-[31px] shrink-0 items-center justify-center"
    }
  >
    <Icon name={name} />
  </button>
);

/* "|" separator, ":" narrow separator, "v" split-button arrow, "V" overflow arrow, "*name" pressed button */
const Items = ({ list }: { list: string }) => (
  <>
    {list.split(" ").map((n, i) => {
      if (n === "|")
        return (
          <div key={i} className="flex w-1.5 shrink-0 justify-center">
            <div className="h-8 w-px bg-white" />
          </div>
        );
      if (n === ":") return <div key={i} className="h-8 w-px shrink-0 bg-white" />;
      if (n === "v")
        return (
          <button key={i} type="button" aria-label="Options" className="flex h-8 w-3 shrink-0 items-center justify-center">
            <Caret />
          </button>
        );
      if (n === "V")
        return (
          <button key={i} type="button" aria-label="Toolbar options" className="flex h-8 w-[13px] shrink-0 items-end justify-center pb-1.5">
            <Caret />
          </button>
        );
      if (n[0] === "*") return <Tool key={i} name={n.slice(1)} active />;
      return <Tool key={i} name={n} />;
    })}
  </>
);

const Bar = ({ list, children, last = false }: { list?: string; children?: React.ReactNode; last?: boolean }) => (
  <div
    className={
      last
        ? "flex min-w-0 flex-1 items-center border-b border-[#cfccba] bg-linear-to-b from-[#f6f5ee] to-[#ecead9]"
        : "flex shrink-0 items-center border-r border-b border-r-[#bdbaa8] border-b-[#cfccba] bg-linear-to-b from-[#f6f5ee] to-[#ecead9]"
    }
  >
    <Grip />
    {children}
    {list && <Items list={list} />}
  </div>
);

const VTool = ({ name, arrow = false }: { name: string; arrow?: boolean }) => (
  <div className="flex h-[31px] shrink-0 items-center">
    <button type="button" aria-label={name} className={arrow ? "ml-1.5 flex items-center" : "mx-auto flex items-center"}>
      <Icon name={name} />
    </button>
    {arrow && (
      <button type="button" aria-label="Options" className="flex w-4 items-center justify-center">
        <Caret />
      </button>
    )}
  </div>
);

const VItems = ({ list }: { list: string }) => (
  <>
    {list.split(" ").map((n, i) =>
      n === "|" ? (
        <div key={i} className="flex h-[5px] shrink-0 items-center px-1">
          <div className="h-px flex-1 bg-[#bdbaa8]" />
        </div>
      ) : (
        <VTool key={i} name={n.replace("+", "")} arrow={n.endsWith("+")} />
      ),
    )}
  </>
);

const LeftCaret = ({ more = false }: { more?: boolean }) => (
  <div className="flex h-[15px] shrink-0 items-center justify-between px-1.5">
    <svg viewBox="0 0 4 6" className="h-1.5 w-1" aria-hidden="true">
      <path d="M4 0v6L0 3z" fill="#000" />
    </svg>
    {more && (
      <svg viewBox="0 0 6 8" className="h-2 w-1.5" aria-hidden="true">
        <path d="M0.500 0.500l2.500 2.500l2.500-2.500M0.500 4.500l2.500 2.500l2.500-2.500" fill="none" stroke="#000" strokeWidth={1.300} />
      </svg>
    )}
  </div>
);

/* ---------- model view ---------- */

const PU = "#8a3cb8";
const CR = "#b8105c";
const BU = "#3c5fc8";
const TE = "#3a9c78";
const YE = "#f2bd3c";
const DG = "#2c8c1c";

const Ring = ({ x, y, r, s, ry = 3 }: { x: number; y: number; r: number; s: string; ry?: number }) => (
  <ellipse cx={x} cy={y} rx={r} ry={ry} fill="none" stroke={s} transform={`rotate(-7 ${x} ${y})`} />
);

const Collar = ({ x, y, r, h, s }: { x: number; y: number; r: number; h: number; s: string }) => (
  <g>
    <Ring x={x} y={y} r={r} s={s} />
    <Ring x={x} y={y + 3} r={r - 2} s={s} ry={2} />
    <Ring x={x + 1} y={y + h} r={r} s={s} />
    <P d={`M${x - r} ${y + 2}l1 ${h}M${x + r} ${y - 2}l1 ${h}`} s={s} />
  </g>
);

const GuidePin = () => (
  <g>
    <Ring x={322} y={266} r={18} s={PU} />
    <Ring x={322} y={270} r={18} s={PU} />
    <P d="M304 268l6 39M340 264l19 106M302 315l12 88M337 312l13 90" s={PU} />
    <Ring x={318} y={308} r={17} s={PU} />
    <Ring x={319} y={314} r={18} s={PU} />
    <Ring x={330} y={315} r={18} s={BU} ry={2} />
    <P d="M311 312l8 100M314 330l8 84M334 326l10 84M341 312l9 98M312 320l6 84" s={BU} />
    <Ring x={322} y={328} r={12} s={BU} ry={2} />
    <Ring x={323} y={352} r={12} s={BU} ry={2} />
    <P d="M308 364q16-7 36-5M307 369q16-7 36-5M309 356l30-3" s={BU} />
    <Collar x={337} y={369} r={21} h={11} s="#5546c4" />
    <P d="M309 362v14M316 372l36-4M319 380l34-6M330 369v10M344 367v10" s={BU} />
    <Ring x={331} y={390} r={12} s={BU} ry={2} />
    <P d="M319 376l1 16M343 374v14" s={BU} />
    <Collar x={333} y={413} r={21} h={11} s="#5546c4" />
    <P d="M320 392l4 38l12 88M342 388l7 42l11 88" s={PU} />
    <P d="M321 395l6 60M343 390l8 66" s={CR} />
    <Ring x={338} y={444} r={12} s={CR} ry={2} />
    <Ring x={339} y={469} r={12} s={CR} ry={2} />
    <Ring x={346} y={499} r={12} s={TE} ry={2} />
    <Ring x={349} y={519} r={16} s={TE} />
    <Ring x={349} y={522} r={14} s={PU} />
    <P d="M335 499l3 20M358 496l3 22" s={TE} />
  </g>
);

const EjectorPin = () => (
  <g>
    <P d="M391 331v5M384 338q7-5 14-2" s={BU} />
    <P d="M383 338l15-3l1 5l-15 2z" f="#7a30c0" />
    <P d="M384 342l5 36M398 340l4 28" s={PU} w={1.400} dash="6 1" />
    <P d="M387 371l17-3M388 373l6 80M404 368l12 92" s={CR} />
    <Ring x={390} y={380} r={7} s={BU} />
    <P d="M382 383l15-2l1 4l-15 2z" f="#7a30c0" />
    <P d="M383 388l5 48M397 386l6 54M388 387l5 50" s={PU} w={1.400} dash="6 1" />
    <P d="M385 415l18-2l1 4l-18 3z" s={CR} />
    <P d="M387 418l8 60M392 418l9 70M404 416l14 130M411 430l14 115M396 470l14 95" s={CR} />
    <P d="M394 430l12 120M409 455l9 60M400 480l10 70" s="#cf8a3a" dash="6 2" />
    <P d="M392 470q12-5 24-3" s={CR} dash="2 2" />
  </g>
);

const Spring = () => (
  <g>
    {[493, 499, 504, 509, 518, 523, 528].map((y) => (
      <Ring key={y} x={y < 515 ? 392 : 394} y={y} r={21} s={TE} ry={4} />
    ))}
    <P d="M374 495l5 76M411 490l6 75M378 545l2 30l38-4l-4-22M373 504h40M376 522h38" s={TE} />
    {[553, 557, 562].map((y) => (
      <Ring key={y} x={398} y={y} r={14} s={PU} />
    ))}
    {[577, 581, 586].map((y) => (
      <Ring key={y} x={399} y={y} r={15} s={PU} />
    ))}
    <P d="M384 555v8M412 550v8M384 577v10M413 574v10" s={PU} />
  </g>
);

const ScrewHead = ({ x, y, w, h, s }: { x: number; y: number; w: number; h: number; s: string }) => (
  <g stroke={s} fill="none">
    <path d={`M${x} ${y + 2}l${w} -3l2 ${h}l${-w} 3z`} strokeWidth={1.500} />
    <path d={`M${x} ${y + 1}q${w / 2} -6 ${w} -2M${x} ${y + 4}q${w / 2} 2 ${w} -3`} strokeWidth={2} />
    <path d={`M${x + w * 0.25} ${y + h - 2}v${-h * 0.4}l${w * 0.5} -2v${h * 0.5}zM${x + w * 0.5} ${y + h - 2}v${-h * 0.5}`} />
    <path d={`M${x + 2} ${y + h + 1}q${w / 2} 3 ${w} -3`} strokeWidth={2} />
  </g>
);

const BigScrew = () => (
  <g>
    <ScrewHead x={409} y={547} w={24} h={20} s="#8420b4" />
    <ScrewHead x={408} y={592} w={25} h={19} s="#8420b4" />
    <P d="M411 548l2 44M428 545l1 46M408 550l24 15M410 566l24-8" s="#8420b4" w={1.500} />
    <P d="M412 575q8-4 16-2M414 583q8-4 16-2" s="#cf8a3a" dash="2 2" />
  </g>
);

const MidScrew = () => (
  <g>
    <P d="M352 526l3 38M363 524l4 40M350 526h14M352 545h13" s={PU} w={1.400} />
    <P d="M351 523l14-2M353 534l11-1M352 569l10-1" s="#f0a02a" w={2} />
    <ScrewHead x={352} y={564} w={18} h={11} s="#8420b4" />
    <P d="M353 576l1 32M364 576l2 32" s={PU} w={1.400} />
    <P d="M354 590l11-1" s="#e8782a" />
    <ScrewHead x={351} y={608} w={19} h={12} s="#8420b4" />
  </g>
);

const EdgeScrew = () => (
  <g>
    <P d="M320 506l12-2l2 30M320 506l1 30M326 500v5" s={PU} w={1.300} />
    <P d="M320 506q6-3 13-1" s={PU} w={2.500} />
    <P d="M321 526l13-1M321 529l13-1" s={DG} w={2} />
    <ScrewHead x={320} y={545} w={20} h={9} s={PU} />
    <P d="M319 537l12-2M331 537l9 8M320 556l22-2" s={PU} w={2} />
    <P d="M321 558l2 15M335 556l2 14" s="#38304c" w={1.400} />
    <P d="M321 557l16-2" s="#38304c" w={2} />
    <ScrewHead x={320} y={573} w={20} h={12} s="#4c3470" />
    <P d="M312 500l-3 60M340 548l1 36" s={DG} />
  </g>
);

const CyanPins = () => (
  <g strokeLinecap="butt">
    {[
      [428, 435, 437, 497],
      [429, 390, 435, 452],
      [444, 547, 452, 608],
      [444, 501, 453, 563],
    ].map(([a, b, c, d]) => (
      <g key={b}>
        <path d={`M${a} ${b}L${c} ${d}`} stroke="#00a8a8" strokeWidth={12} />
        <path d={`M${a - 1} ${b}L${c - 1} ${d}`} stroke="#00f0ec" strokeWidth={9} />
        <path d={`M${c - 6} ${d + 1}l12 -2`} stroke="#0c5c74" strokeWidth={1.500} />
      </g>
    ))}
    <P d="M424 390l4-3l8 3M422 434l3-3M438 390l5 70M428 386v3" s={CR} />
    <P d="M430 452h11M432 497h10M441 547h5M443 462l6 40M434 498l9 86M447 500l3 48" s={YE} w={1.500} />
  </g>
);

const Rod = ({ d, x, y }: { d: string; x: number; y: number }) => (
  <g>
    <path d={d} stroke="#1c4f78" strokeWidth={10} />
    <path d={d} stroke="#2c87ba" strokeWidth={8} />
    <path d={d} stroke="#5cb4dc" strokeWidth={3} />
    <path d={`M${x - 6} ${y + 1}l12 -2l1 5q-6 4 -12 1z`} fill="#3c8cbc" stroke="#1c4f78" />
  </g>
);

const Model = () => (
  <svg
    viewBox="82 179 897 522"
    className="absolute inset-0 size-full"
    preserveAspectRatio="xMidYMid meet"
    role="img"
    aria-label="Mold base model"
    fill="none"
  >
    <defs>
      <linearGradient id="faceBlue" x1="0" y1="0" x2="1" y2="1">
        <stop offset="0" stopColor="#f4f8ff" />
        <stop offset="1" stopColor="#6f93f0" />
      </linearGradient>
      <linearGradient id="paper" x1="0" y1="0" x2="1" y2="1">
        <stop offset="0" stopColor="#ffffff" />
        <stop offset="1" stopColor="#c6d2fb" />
      </linearGradient>
    </defs>

    <g shapeRendering="crispEdges">
      <P d="M285 317L660 265L669 327L668 382M285 317L284 372L293 433M285 317L294 378L293 433M284 372L660 321M294 378L669 327M660 265V326L668 382" s={BU} />
      <P d="M294 378L303 434L302 490M669 327L677 382L675 434" s={CR} />

      <P d="M363 318L582 289L586 319V351L368 381L363 349ZM363 318L368 349V381M582 289L581 321M363 350L586 320M363 349L586 319" s={TE} />
      <Ring x={468} y={293} r={76} ry={13} s="#3aae62" />
      <Ring x={469} y={294} r={60} ry={10} s={TE} />
      <Ring x={466} y={296} r={50} ry={9} s="#3aae62" />
      <Ring x={472} y={291} r={52} ry={8} s={TE} />
      <Ring x={473} y={320} r={79} ry={14} s="#3aae62" />
      <P d="M423 311l2 23M515 279l4 20M462 284q8-4 16 0v17h-16zM420 290q30-13 100-8" s={TE} />

      <P d="M293 433L317 588M302 434L317 601M677 382L691 494V549M675 384L688 440M303 434L322 548M682 390L691 470" s={YE} />
      <P d="M293 434L677 382" s={YE} />
      <P d="M293 434L677 382" s="#5a4a6c" dash="7 5" />
      <P d="M301 446L680 394M302 478L676 428M304 490L683 437M320 545L690 494M318 560L692 509M317 601L691 549M312 500L322 588" s={YE} />
      <P d="M312 501L684 449L691 470M315 525L690 473M308 534L690 483M312 501L309 560L317 589" s={TE} />
      <P d="M318 541L692 488M318 571L696 519M317 605L691 554M321 636L696 584L697 519L692 488V554M316 548L321 636" s={PU} />
      <P d="M309 558L692 506M317 589L692 538L690 483" s={DG} />

      <GuidePin />
      <g transform="translate(290 -40)"><GuidePin /></g>
      <Spring />
      <g transform="translate(212 -30)"><Spring /></g>
      <EjectorPin />
      <g transform="translate(172 -24)"><EjectorPin /></g>
      <BigScrew />
      <g transform="translate(173 -24)"><BigScrew /></g>
      <MidScrew />
      <g transform="translate(292 -41)"><MidScrew /></g>
      <EdgeScrew />
      <g transform="translate(345 -48)"><EdgeScrew /></g>

      <Ring x={505} y={545} r={20} s={PU} ry={3} />
      <Ring x={509} y={579} r={20} s={PU} ry={3} />
      <P d="M485 547l4 34M525 542l5 34" s={PU} />
    </g>

    <CyanPins />
    <g transform="translate(112 -16)"><CyanPins /></g>
    <Rod d="M440 269L474 517" x={474} y={518} />
    <Rod d="M490 263L525 509" x={525} y={511} />

    <g shapeRendering="crispEdges">
      <P d="M467 277l3 24" s="#2424b4" w={1.500} />
      <P d="M470 301l2 16" s="#24245c" />
      <P d="M472 317l42-3" s="#3ce03c" />
      <P d="M471 317l2-6" s={RD} w={1.500} />
    </g>
    <g fill="#d81c3c" fontSize={11} fontFamily="'Liberation Sans', Arial, sans-serif">
      <text x={464} y={261}>ZC</text>
      <text x={473} y={311}>XC</text>
      <text x={532} y={311}>YC</text>
    </g>
  </svg>
);

/* ---------- page ---------- */

const menus: [string, string][] = [
  ["文件", "F"], ["编辑", "E"], ["视图", "V"], ["插入", "S"], ["格式", "R"], ["工具", "T"],
  ["装配", "A"], ["信息", "I"], ["分析", "L"], ["首选项", "P"], ["窗口", "O"], ["帮助", "H"],
];

const tasks: { icon: string; label: string; active?: boolean }[] = [
  { icon: "wmp", label: "Windows Media Player" },
  { icon: "skype", label: "TOM-Skype (TM) - yo..." },
  { icon: "chat", label: "Carrie (联机) TOM-S..." },
  { icon: "nx", label: "NX 4 - Modeling - [de...", active: true },
];

const resourceTabs = [["asmNav", "partNav"], ["web", "training", "help"], ["history", "paletteTab", "wizardTab", "people", "blankBox", "roles"]];

const tray = ["penguinRed", "penguinNote", "penguinNote", "star", "bird", "skypeOk", "nv"];

export default function App() {
  return (
    <div className="relative flex h-screen min-h-[700px] w-full flex-col overflow-hidden bg-[#ece9d8] font-['Noto_Sans','Noto_Sans_CJK_SC',sans-serif] text-xs text-black">
      <header className="flex h-[27px] shrink-0 items-center border-t-2 border-[#2a3450] bg-linear-to-b from-[#74788e] via-[#3c3f50] to-[#17181f] pl-0.5 text-white">
        <Icon name="nx" className="size-4" />
        <h1 className="ml-1 flex-1 truncate text-[13px] leading-5 font-bold whitespace-pre [text-shadow:1px_1px_1px_#000]">
          NX 4 - Modeling - [design_1_top_000.prt  <span className="text-base leading-5">（修改的）</span>  ]
        </h1>
        <div className="mr-1.5 flex self-start pt-1">
          <button type="button" aria-label="Minimize" className="flex h-[15px] w-[25px] items-end justify-center rounded-l border border-[#9a9caa] bg-linear-to-b from-[#7d8092] to-[#33353f] pb-[3px]">
            <span className="h-0.5 w-2.5 bg-white" />
          </button>
          <button type="button" aria-label="Restore" className="flex h-[15px] w-[26px] items-center justify-center border border-[#9a9caa] bg-linear-to-b from-[#7d8092] to-[#33353f]">
            <svg viewBox="0 0 9 9" className="size-[9px]"><path d="M3 1h5v4H7M1 4h5v4H1z" fill="none" stroke="#fff" strokeWidth={1.500} /></svg>
          </button>
          <button type="button" aria-label="Close" className="flex h-[15px] w-[30px] items-center justify-center rounded-r border border-[#d86a5a] bg-linear-to-b from-[#e84438] to-[#b40c0c]">
            <svg viewBox="0 0 9 9" className="size-[9px]"><path d="M1 1l7 7M8 1l-7 7" stroke="#fff" strokeWidth={2} /></svg>
          </button>
        </div>
      </header>

      <nav className="flex h-[25px] shrink-0 items-center border-b border-[#c9c6b4] bg-linear-to-r from-[#f8f7f2] to-[#ecead9]">
        <Grip />
        <Icon name="assembly" className="size-4" />
        <ul className="ml-1.5 flex gap-[11px]">
          {menus.map(([t, k]) => (
            <li key={k}>
              <button type="button" className="leading-4">
                {t}<span className="font-['Liberation_Sans',Arial,sans-serif]">(<u>{k}</u>)</span>
              </button>
            </li>
          ))}
        </ul>
        <button type="button" aria-label="Close document" className="mr-1 ml-auto flex size-4 items-center justify-center border border-white bg-[#f6f5ee]">
          <svg viewBox="0 0 9 9" className="size-2"><path d="M1 1l7 7M8 1l-7 7" stroke="#77756a" strokeWidth={2} /></svg>
        </button>
      </nav>

      <div className="flex h-[34px] shrink-0">
        <Bar>
          <button type="button" className="flex h-8 w-[67px] items-center gap-1 pl-0.5">
            <Icon name="nx" className="size-6" />
            <span>起始</span>
            <Caret />
          </button>
          <Items list="newFile open save | cut copy paste del | undo | info V" />
        </Bar>
        <Bar list="fit fitGrey zoomBox zoomInOut rotate pan perspective | shade v wedge v V" />
        <Bar last>
          <Items list="freeform sheet layers |" />
          <button type="button" className="h-[22px] w-[67px] shrink-0 rounded-[3px] border border-[#6b5a4a] bg-[#ffd0a0] whitespace-nowrap">注塑模向导</button>
          <button type="button" className="h-[22px] w-[68px] shrink-0 whitespace-nowrap">级进模向导</button>
          <Items list="| *moldWizard" />
          <div className="mr-1 ml-auto flex h-full flex-col items-center justify-between py-1.5">
            <svg viewBox="0 0 8 6" className="h-1.5 w-2"><path d="M0.500 0.500l3 2.500l-3 2.500M4.500 0.500l3 2.500l-3 2.500" fill="none" stroke="#000" strokeWidth={1.300} /></svg>
            <Caret />
          </div>
        </Bar>
      </div>
      <div className="flex h-[34px] shrink-0">
        <Bar list="filter v : treeGrey V" />
        <Bar list="*wcs points palette showHide hideShow V" />
        <Bar list="line lineMid curve cross circleDot circleQuad plusGrey V" />
        <Bar list="ruler angle V" />
        <Bar list="p1 gapCheck boxCheck balance V" />
        <Bar list="spline v project v V" />
      </div>
      <div className="flex h-[34px] shrink-0">
        <Bar list="projectInit family moldCsys workpiece cavityLayout moldTools blankBox parting moldBase standardPart ejector slider insert gate runner cooling electrode trim subtract bom drawing v eye refreshDb V" />
      </div>

      <div className="grid h-[23px] shrink-0 grid-cols-[47%_1fr_20px_36px] border-t border-[#c9c6b4] bg-[#ece9d8]">
        <div />
        <div className="flex items-center border-l border-[#c9c6b4] pb-1 pl-1 font-bold">回叫参数不正确。</div>
        <div className="my-0.5 border-l border-[#c9c6b4]" />
        <div className="my-0.5 border-x border-[#c9c6b4]" />
      </div>

      <main className="flex min-h-0 flex-1">
        <div className="flex w-[46px] shrink-0 flex-col border-r border-[#c9c6b4] bg-linear-to-r from-[#fbfaf6] to-[#ecead9]">
          <Grip vertical />
          <VItems list="sketch | extrude revolve sweep | hole" />
          <LeftCaret more />
          <div className="border-t border-[#bdbaa8]" />
          <Grip vertical />
          <VItems list="unite+ trimBody+ offsetCube blend chamfer shell bodies hole | booleanBox pattern" />
          <LeftCaret />
        </div>
        <div className="w-[35px] shrink-0">
          <div className="flex flex-col border-b border-[#bdbaa8] bg-linear-to-r from-[#fbfaf6] to-[#ecead9]">
            <Grip vertical />
            <VItems list="surf1 surf2 surf3 sweptSurf section boundedPlane tjoint | nsided rollSurf offsetSurf | trimSheet bridge" />
            <LeftCaret />
          </div>
        </div>
        <div className="relative my-px min-w-0 flex-1 border border-l-2 border-[#e01028] bg-[linear-gradient(180deg,#78aad3_0%,#86b0d4_18%,#a3c0d8_36%,#c3d3e0_52%,#dcdfe4_68%,#e6e6e6_80%)] bg-origin-border">
          <Model />
          <span className="absolute bottom-0 left-[3px] font-['Liberation_Sans',Arial,sans-serif] text-[13px] leading-4 font-bold text-[#e00c0c]">
            TFR-ISO WORK
          </span>
        </div>
        <div className="ml-[9px] flex w-[35px] shrink-0 flex-col gap-3 border-l-2 border-[#8a887a] bg-[#aca899] pt-[15px]">
          {resourceTabs.map((group, i) => (
            <div key={i} className="flex w-[27px] flex-col bg-[#efede0]">
              {group.map((n) => (
                <button key={n} type="button" aria-label={n} className="flex h-[41px] items-center justify-center border-b border-[#c9c6b4]">
                  <Icon name={n} />
                </button>
              ))}
            </div>
          ))}
        </div>
      </main>

      <div className="flex h-[35px] shrink-0 border-t border-white">
        <Bar>
          <Items list="findComp openComp selectComp context wireComp saveComp greyComp | addComp newComp newParent array removeComp mirror moveComp mate replace replaceTo wrench wrenchCross" />
          <div className="relative mx-[3px] h-[19px] w-[94px] shrink-0">
            <select aria-label="Component set" className="size-full appearance-none border border-[#c0bdae] bg-[#ece9d8]">
              <option> </option>
            </select>
            <span className="pointer-events-none absolute top-0.5 right-0.5 flex h-[15px] w-4 items-center justify-center border border-[#d6d3c4] bg-[#f2f0e6]">
              <svg viewBox="0 0 8 5" className="h-[5px] w-2"><path d="M0.500 0.500l3.500 3.500l3.500-3.500" fill="none" stroke="#b0ad9c" strokeWidth={1.500} /></svg>
            </span>
          </div>
          <Items list="nodeBox | explode sequence | wave windowComp chain | checkComp V" />
        </Bar>
      </div>

      <footer className="flex h-[30px] shrink-0 items-center bg-linear-to-b from-[#6c7088] via-[#33364a] to-[#12131c] text-[11px] text-white">
        <button type="button" className="flex h-7 w-[90px] shrink-0 items-center gap-2 rounded-r-2xl border border-[#55586a] bg-linear-to-b from-[#3a3c46] to-[#050508] pl-2 text-lg leading-6">
          <Icon name="flag" className="size-5" />
          start
        </button>
        <div className="flex w-[99px] shrink-0 items-center gap-2 pl-2.5">
          <Icon name="ie" className="size-[15px]" />
          <Icon name="outlook" className="size-[15px]" />
          <Icon name="qqLight" className="size-[15px]" />
          <span className="mb-2 ml-1 text-[13px] leading-3">»</span>
        </div>
        <div className="flex min-w-0 flex-1 gap-0.5">
          {tasks.map((t) => (
            <button
              key={t.label}
              type="button"
              className={
                t.active
                  ? "flex h-[26px] max-w-[152px] min-w-0 flex-1 items-center gap-1 rounded-sm border border-[#15161f] bg-[#1c1e2b] pl-2"
                  : "flex h-[26px] max-w-[152px] min-w-0 flex-1 items-center gap-1 rounded-sm border border-[#565a70] bg-linear-to-b from-[#5c6079] to-[#262837] pl-2"
              }
            >
              <Icon name={t.icon} className="size-4" />
              <span className="truncate font-['DejaVu_Sans_Condensed','Noto_Sans_CJK_SC',sans-serif]">{t.label}</span>
            </button>
          ))}
        </div>
        <div className="flex shrink-0 items-center gap-0.5 pr-3 pl-2">
          <Icon name="keyboard" className="size-[14px]" />
          <span className="px-1.5 text-base leading-4">‹</span>
          {tray.map((n, i) => (
            <Icon key={i} name={n} className="size-4" />
          ))}
          <time className="ml-1.5 font-['DejaVu_Sans_Condensed',sans-serif]">19:23</time>
        </div>
      </footer>

      <div className="absolute top-4 right-4 size-9 border-2 border-[#3a2c28] bg-linear-to-b from-[#3f7f9c] to-[#2a7ca4]">
        <svg viewBox="0 0 33 33" className="size-full" aria-hidden="true">
          <path d="M30 2C20 4 9 9 5 17c-2 4 0 5 2 3l5 1l-3 3l4-1l3 4l-1-5l11 2l-6-4l5-1l-10-2l-4-2c3-5 9-9 19-13z" fill="#fff" />
        </svg>
      </div>

      <svg viewBox="0 0 154 80" className="pointer-events-none absolute top-[125px] left-[451px] h-20 w-[154px]" shapeRendering="crispEdges" aria-hidden="true">
        <path
          d="M26 1L10 5L3 17L1 26L3 44L12 57L27 70L48 78H78L110 74L136 64L151 56L152 44L151 30L146 24L120 13L98 10L78 5L50 0H30L22 3M74 78L90 72L93 70"
          fill="none"
          stroke="#111"
        />
      </svg>
    </div>
  );
}
